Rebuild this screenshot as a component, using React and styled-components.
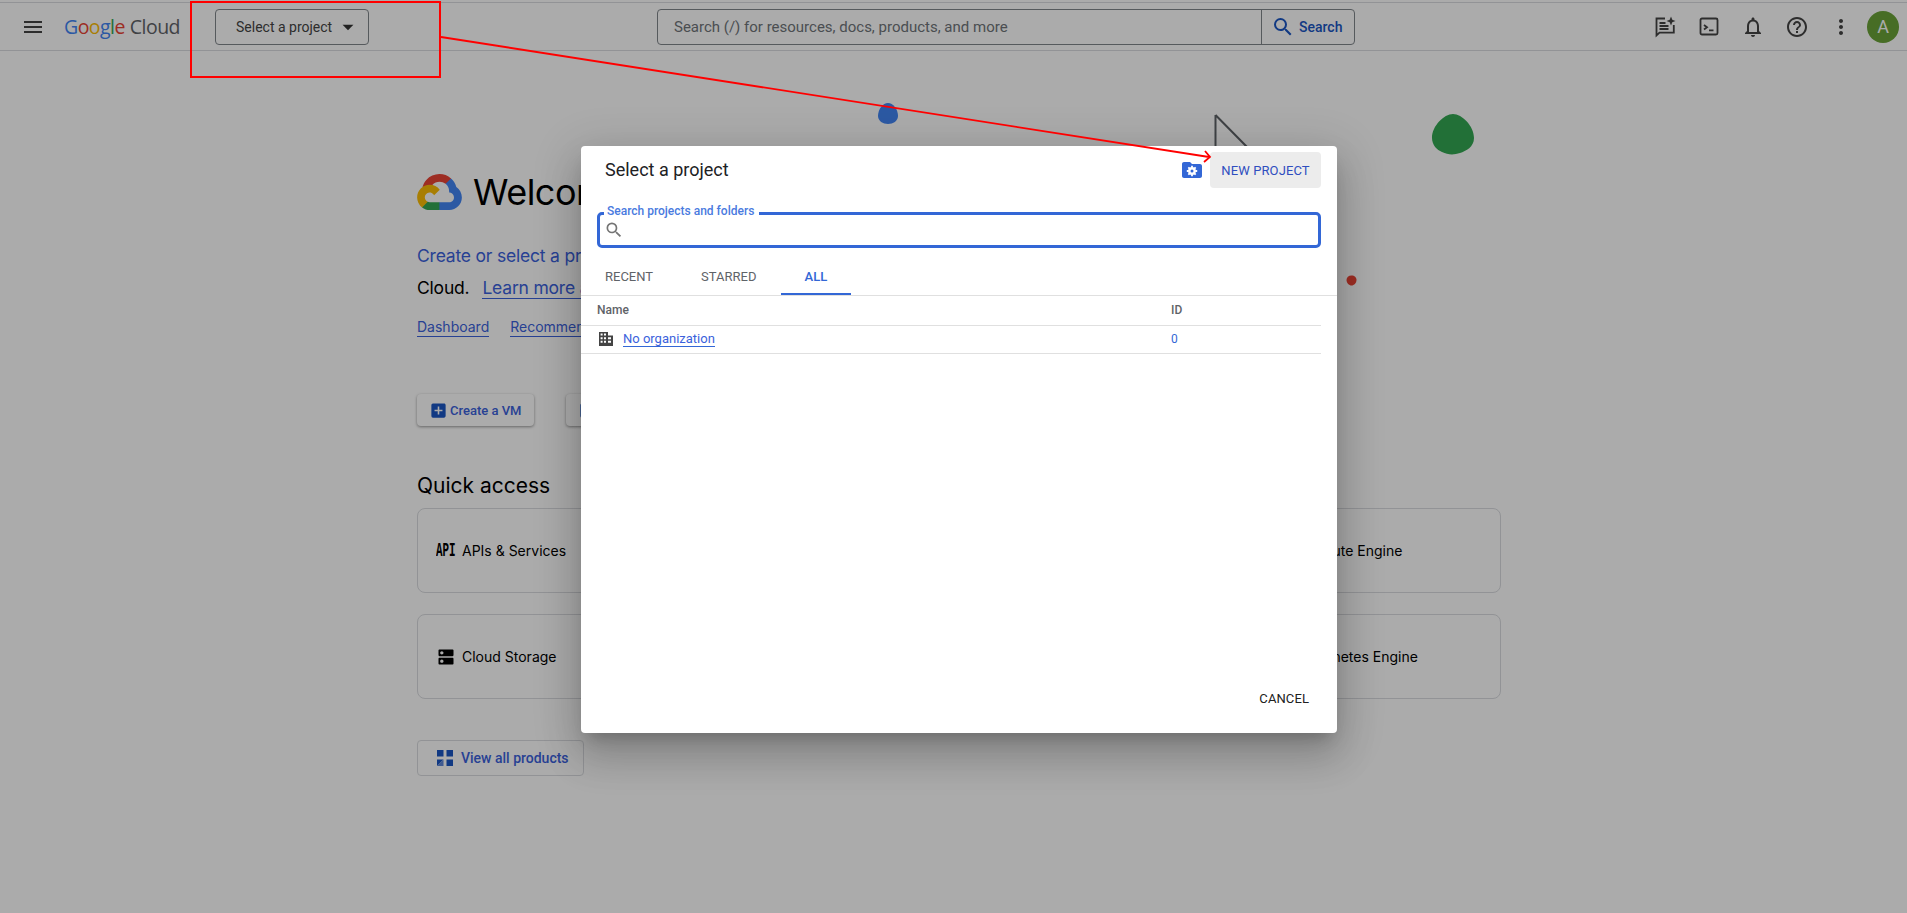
import React from 'react';
import styled, { createGlobalStyle } from 'styled-components';
import {
  MdMenu,
  MdSearch,
  MdArrowDropDown,
  MdNotificationsNone,
  MdHelpOutline,
  MdMoreVert,
  MdAddBox,
  MdDns,
} from 'react-icons/md';

const linkColor = '#3b62dc';

const GlobalStyle = createGlobalStyle`
  html, body {
    margin: 0;
    height: 100%;
    overflow: hidden;
    background: #fff;
    font-family: Roboto, "Liberation Sans", sans-serif;
  }
`;

const Page = styled.div`
  position: relative;
  width: 1907px;
  height: 913px;
  overflow: hidden;
  padding-top: 2px;
  box-sizing: border-box;
`;

const TopLine = styled.div`
  height: 1px;
  background: #dadce0;
`;

const TopBar = styled.header`
  display: flex;
  align-items: center;
  height: 48px;
  box-sizing: border-box;
  border-bottom: 1px solid #dadce0;
  padding: 0 8px 0 21px;
`;

const MenuButton = styled.div`
  display: flex;
  color: #444;
  width: 43px;
`;

const Logo = styled.div`
  display: flex;
  align-items: baseline;
  font-family: "Open Sans", sans-serif;
  font-size: 19.5px;
  letter-spacing: -0.55px;
  width: 151px;
  color: #5f6368;
`;

const LogoLetter = styled.span`
  color: ${(p) => p.$color};
`;

const LogoWord = styled.span`
  margin-left: 5px;
`;

const ProjectButton = styled.div`
  display: flex;
  align-items: center;
  box-sizing: border-box;
  width: 154px;
  height: 36px;
  padding-left: 20px;
  border: 1px solid #80868b;
  border-radius: 4px;
  font-size: 14px;
  color: #444;
  svg {
    margin-left: 3px;
    color: #333;
  }
`;

const SearchBar = styled.div`
  display: flex;
  box-sizing: border-box;
  width: 698px;
  height: 36px;
  margin-left: 288px;
  border: 1px solid #80868b;
  border-radius: 4px;
`;

const SearchInput = styled.div`
  flex: 1;
  display: flex;
  align-items: center;
  padding-left: 16px;
  font-size: 15px;
  color: #70757a;
  border-right: 1px solid #80868b;
`;

const SearchAction = styled.div`
  display: flex;
  align-items: center;
  gap: 4px;
  width: 92px;
  box-sizing: border-box;
  padding-left: 9px;
  font-size: 14px;
  font-weight: 500;
  color: #1a56c4;
`;

const TopIcons = styled.div`
  display: flex;
  align-items: center;
  margin-left: auto;
`;

const TopIcon = styled.div`
  display: flex;
  justify-content: center;
  width: 44px;
  color: #444;
`;

const Avatar = styled.div`
  display: flex;
  align-items: center;
  justify-content: center;
  width: 32px;
  height: 32px;
  margin-left: 4px;
  border-radius: 50%;
  background: #6aa338;
  color: #fff;
  font-size: 18px;
`;

const Main = styled.main`
  width: 1084px;
  margin-left: 417px;
  padding-top: 123px;
`;

const Welcome = styled.div`
  display: flex;
  align-items: center;
  gap: 11px;
  height: 36px;
  font-family: Inter, sans-serif;
  font-size: 36px;
  letter-spacing: -0.5px;
  color: #000;
`;

const Lead = styled.p`
  margin: 30px 0 0;
  font-family: Inter, sans-serif;
  font-size: 17.5px;
  letter-spacing: -0.2px;
  line-height: 32px;
  color: ${linkColor};
`;

const LeadPlain = styled.span`
  color: #000;
  margin-right: 13px;
`;

const UnderLink = styled.span`
  border-bottom: 1px solid ${linkColor};
  color: ${linkColor};
`;

const NavLinks = styled.div`
  display: flex;
  gap: 21px;
  margin-top: 14px;
  font-family: Inter, sans-serif;
  font-size: 14px;
  line-height: 18px;
  color: ${linkColor};
`;

const ActionRow = styled.div`
  display: flex;
  gap: 32px;
  margin-top: 57px;
`;

const ActionButton = styled.div`
  display: flex;
  align-items: center;
  gap: 2px;
  box-sizing: border-box;
  width: 117px;
  height: 32px;
  padding-left: 12px;
  border-radius: 4px;
  background: #fff;
  box-shadow: 0 1px 3px rgba(0, 0, 0, 0.4);
  font-size: 13px;
  font-weight: 500;
  color: ${linkColor};
  svg {
    color: #1a56c4;
  }
`;

const SectionTitle = styled.h2`
  margin: 44px 0 0;
  font-family: Inter, sans-serif;
  font-size: 21px;
  font-weight: 400;
  line-height: 32px;
  color: #000;
`;

const CardGrid = styled.div`
  display: grid;
  grid-template-columns: repeat(4, 1fr);
  gap: 21px 24px;
  margin-top: 6px;
`;

const Card = styled.div`
  display: flex;
  align-items: center;
  gap: 6px;
  box-sizing: border-box;
  height: 85px;
  padding-left: 18px;
  border: 1px solid #dadce0;
  border-radius: 8px;
  font-family: Inter, sans-serif;
  font-size: 14px;
  color: #000;
`;

const ApiGlyph = styled.span`
  display: inline-block;
  width: 20px;
  font-family: "Liberation Mono", monospace;
  font-size: 16px;
  font-weight: 700;
  color: #000;
  transform: scale(0.68, 1.3);
  transform-origin: left center;
`;

const ViewAll = styled.div`
  display: flex;
  align-items: center;
  gap: 8px;
  box-sizing: border-box;
  width: 167px;
  height: 36px;
  margin-top: 41px;
  padding-left: 19px;
  border: 1px solid #dadce0;
  border-radius: 4px;
  font-size: 14px;
  font-weight: 500;
  color: ${linkColor};
`;

const Shape = styled.svg`
  position: absolute;
  left: ${(p) => p.$x}px;
  top: ${(p) => p.$y}px;
`;

const Scrim = styled.div`
  position: absolute;
  inset: 0;
  background: rgba(0, 0, 0, 0.33);
`;

const Dialog = styled.div`
  position: absolute;
  left: 581px;
  top: 146px;
  width: 756px;
  height: 587px;
  display: flex;
  flex-direction: column;
  box-sizing: border-box;
  background: #fff;
  border-radius: 4px;
  box-shadow: 0 11px 15px -7px rgba(0, 0, 0, 0.2), 0 24px 38px 3px rgba(0, 0, 0, 0.14),
    0 9px 46px 8px rgba(0, 0, 0, 0.12);
`;

const DialogHead = styled.div`
  display: flex;
  align-items: center;
  height: 36px;
  margin-top: 6px;
  padding: 0 16px 0 24px;
`;

const DialogTitle = styled.h1`
  flex: 1;
  margin: 0 0 2px;
  font-size: 18px;
  font-weight: 400;
  color: #202124;
`;

const NewProject = styled.div`
  display: flex;
  align-items: center;
  justify-content: center;
  width: 111px;
  height: 36px;
  margin-left: 8px;
  border-radius: 4px;
  background: #ececec;
  font-size: 13px;
  letter-spacing: 0.1px;
  color: #2f4ebf;
`;

const SearchField = styled.div`
  position: relative;
  display: flex;
  align-items: center;
  box-sizing: border-box;
  height: 36px;
  margin: 24px 16px 0;
  padding-left: 4px;
  border: 3px solid #3367d6;
  border-radius: 5px;
  color: #757575;
`;

const FieldLabel = styled.span`
  position: absolute;
  left: 4px;
  top: -12px;
  padding: 0 5px 0 3px;
  background: #fff;
  font-size: 12px;
  line-height: 16px;
  font-weight: 500;
  color: #4a7be0;
`;

const Tabs = styled.div`
  display: flex;
  margin-top: 11px;
  height: 37px;
  box-sizing: border-box;
  border-bottom: 1px solid #e0e0e0;
`;

const Tab = styled.div`
  display: flex;
  align-items: center;
  padding: 0 24px;
  height: 36px;
  box-sizing: border-box;
  font-size: 13px;
  font-weight: ${(p) => (p.$active ? 500 : 400)};
  color: ${(p) => (p.$active ? '#3367d6' : '#5f6368')};
  border-bottom: 2px solid ${(p) => (p.$active ? '#3367d6' : 'transparent')};
`;

const TableRow = styled.div`
  display: grid;
  grid-template-columns: 574px 1fr;
  align-items: center;
  height: ${(p) => p.$h}px;
  box-sizing: border-box;
  margin-right: 16px;
  padding: 0 0 1px 16px;
  border-bottom: 1px solid #e0e0e0;
  font-size: 12px;
`;

const HeadCell = styled.div`
  font-weight: 500;
  color: #5f6368;
`;

const NameCell = styled.div`
  display: flex;
  align-items: center;
  gap: 10px;
  padding-left: 2px;
  color: #444;
`;

const OrgLink = styled.span`
  font-size: 13px;
  color: ${linkColor};
  border-bottom: 1px solid #3367d6;
`;

const IdCell = styled.div`
  font-size: 12px;
  color: #3367d6;
`;

const DialogFoot = styled.div`
  display: flex;
  justify-content: flex-end;
  margin-top: auto;
  padding: 0 28px 27px 0;
  font-size: 13px;
  letter-spacing: 0.1px;
  color: #212121;
`;

const Annotation = styled.svg`
  position: absolute;
  inset: 0;
  pointer-events: none;
`;

const CloudLogo = () => (
  <svg width="45" height="36" viewBox="0 0 256 206">
    <path fill="#EA4335" d="M170.25 56.82l22.25-22.25 1.49-9.37C153.44-11.68 88.98-7.5 52.42 33.92 42.27 45.42 34.73 59.76 30.72 74.57l7.97-1.12 44.5-7.34 3.44-3.51c19.8-21.74 53.27-24.67 76.13-6.17l7.5.39z" />
    <path fill="#4285F4" d="M224.2 73.92c-5.11-18.84-15.62-35.77-30.22-48.72l-31.23 31.23c13.19 10.78 20.7 27.01 20.38 44.04v5.54c15.35 0 27.8 12.45 27.8 27.8 0 15.35-12.45 27.48-27.8 27.48h-55.67l-5.47 5.93v33.34l5.47 5.23h55.67c39.93.31 72.55-31.49 72.86-71.42.19-24.2-11.74-46.89-31.79-60.45" />
    <path fill="#34A853" d="M71.87 205.8h55.59v-44.51H71.87c-3.96 0-7.8-.85-11.4-2.5l-7.89 2.42-22.41 22.25-1.95 7.57c12.57 9.49 27.9 14.83 43.65 14.76" />
    <path fill="#FBBC05" d="M71.87 61.43C31.94 61.66-.24 94.23 0 134.16c.13 22.3 10.55 43.29 28.22 56.88l32.25-32.25c-13.99-6.32-20.21-22.79-13.89-36.78 6.32-13.99 22.79-20.21 36.78-13.89 6.16 2.79 11.1 7.72 13.89 13.89l32.25-32.25c-13.72-17.94-35.04-28.42-57.62-28.34" />
  </svg>
);

const ChatSpark = () => (
  <svg width="22" height="22" viewBox="0 0 22 22" fill="none" stroke="currentColor" strokeWidth="1.8">
    <path d="M11 2.5H2.5v17l3-2.8H19.8V9" />
    <path d="M5.5 7h6M5.5 10h9M5.5 13h9" />
    <path d="M17 0.5l1.3 3.2 3.2 1.3-3.2 1.3L17 9.5l-1.3-3.2L12.5 5l3.2-1.3z" fill="currentColor" stroke="none" />
  </svg>
);

const TerminalBox = () => (
  <svg width="20" height="20" viewBox="0 0 20 20" fill="none" stroke="currentColor" strokeWidth="1.8">
    <rect x="1.5" y="1.5" width="17" height="16" rx="1.5" />
    <path d="M5 8l3 2.2L5 12.4M10 13.4h4.5" />
  </svg>
);

const FolderGear = () => (
  <svg width="20" height="16" viewBox="0 0 20 16">
    <path fill="#3367d6" d="M2 0h6l2 2h8c1.1 0 2 .9 2 2v10c0 1.1-.9 2-2 2H2c-1.1 0-2-.9-2-2V2C0 .9.9 0 2 0z" />
    <circle cx="10" cy="9" r="3.9" fill="#fff" />
    <path stroke="#fff" strokeWidth="1.8" d="M10 3.8v2M10 12.2v2M4.8 9h2M13.2 9h2M6.3 5.3l1.4 1.4M12.3 11.3l1.4 1.4M6.3 12.7l1.4-1.4M12.3 6.7l1.4-1.4" />
    <circle cx="10" cy="9" r="1.5" fill="#3367d6" />
  </svg>
);

const Building = () => (
  <svg width="14" height="14" viewBox="0 0 14 14">
    <path
      fill="currentColor"
      fillRule="evenodd"
      d="M0 0h9v3.5h5V14H0zM1.6 1.6v2h2v-2zM5 1.6v2h2v-2zM1.6 5.2v2h2v-2zM5 5.2v2h2v-2zM9 5.2v2h3v-2zM1.6 8.8v2h2v-2zM5 8.8v2h2v-2zM9 8.8v2h3v-2z"
    />
  </svg>
);

const ProductsGrid = () => (
  <svg width="16" height="16" viewBox="0 0 16 16">
    <path fill="#1a56c4" d="M0 0h6.5v6.5H0zM9.5 0H16v6.5H9.5zM9.5 9.5H16V16H9.5z" />
    <path fill="#1a56c4" d="M0 16V9.5h6.5z" />
    <path fill="#5f86d8" d="M0 16L6.5 9.5V16z" />
  </svg>
);

const letters = [
  ['G', '#4285f4'],
  ['o', '#ea4335'],
  ['o', '#fbbc05'],
  ['g', '#4285f4'],
  ['l', '#34a853'],
  ['e', '#ea4335'],
];

const cards = [
  'APIs & Services',
  'IAM & Admin',
  'Billing',
  'Compute Engine',
  'Cloud Storage',
  'BigQuery',
  'VPC network',
  'Kubernetes Engine',
];

const App = () => {
  return (
    <Page>
      <GlobalStyle />
      <TopLine />
      <TopBar>
        <MenuButton>
          <MdMenu size={24} />
        </MenuButton>
        <Logo>
          {letters.map(([l, c], i) => (
            <LogoLetter key={i} $color={c}>{l}</LogoLetter>
          ))}
          <LogoWord>Cloud</LogoWord>
        </Logo>
        <ProjectButton>
          Select a project
          <MdArrowDropDown size={26} />
        </ProjectButton>
        <SearchBar>
          <SearchInput>Search (/) for resources, docs, products, and more</SearchInput>
          <SearchAction>
            <MdSearch size={24} />
            Search
          </SearchAction>
        </SearchBar>
        <TopIcons>
          <TopIcon><ChatSpark /></TopIcon>
          <TopIcon><TerminalBox /></TopIcon>
          <TopIcon><MdNotificationsNone size={24} /></TopIcon>
          <TopIcon><MdHelpOutline size={24} /></TopIcon>
          <TopIcon><MdMoreVert size={24} /></TopIcon>
          <Avatar>A</Avatar>
        </TopIcons>
      </TopBar>

      <Main>
        <Welcome>
          <CloudLogo />
          Welcome
        </Welcome>
        <Lead>
          Create or select a project to get started with Google
          <br />
          <LeadPlain>Cloud.</LeadPlain>
          <UnderLink>Learn more about Google Cloud</UnderLink>
        </Lead>
        <NavLinks>
          <UnderLink>Dashboard</UnderLink>
          <UnderLink>Recommendations</UnderLink>
        </NavLinks>
        <ActionRow>
          <ActionButton>
            <MdAddBox size={19} />
            Create a VM
          </ActionButton>
          <ActionButton>
            <MdAddBox size={19} />
            Run a query
          </ActionButton>
        </ActionRow>
        <SectionTitle>Quick access</SectionTitle>
        <CardGrid>
          {cards.map((name, i) => (
            <Card key={name}>
              {i === 0 ? <ApiGlyph>API</ApiGlyph> : <MdDns size={20} />}
              {name}
            </Card>
          ))}
        </CardGrid>
        <ViewAll>
          <ProductsGrid />
          View all products
        </ViewAll>
      </Main>

      <Shape $x={877} $y={102} width="22" height="23" viewBox="0 0 22 23">
        <path fill="#4285f4" d="M11 1c5 0 10 6 10 13 0 5-5 8-10 8S1 19 1 14C1 7 6 1 11 1z" />
      </Shape>
      <Shape $x={1213} $y={113} width="40" height="40" viewBox="0 0 40 40">
        <path fill="none" stroke="#5f6368" strokeWidth="2" d="M2.5 2L2.5 34M2.5 2L36 36" />
      </Shape>
      <Shape $x={1431} $y={113} width="44" height="44" viewBox="0 0 44 44">
        <path fill="#34a853" d="M22 1c9 0 21 12 21 24 0 9-8 13-14 15-6 2-12 2-18-1C6 37 1 32 1 25 1 13 13 1 22 1z" />
      </Shape>
      <Shape $x={1346} $y={275} width="11" height="11" viewBox="0 0 11 11">
        <path fill="#ea4335" d="M5.5 0.5c3 0 5 2 5 4.5 0 3-2.5 5.5-5 5.5S.5 8 .5 5C.5 2.5 2.5.5 5.5.5z" />
      </Shape>

      <Scrim />

      <Dialog>
        <DialogHead>
          <DialogTitle>Select a project</DialogTitle>
          <FolderGear />
          <NewProject>NEW PROJECT</NewProject>
        </DialogHead>
        <SearchField>
          <FieldLabel>Search projects and folders</FieldLabel>
          <MdSearch size={20} />
        </SearchField>
        <Tabs>
          <Tab>RECENT</Tab>
          <Tab>STARRED</Tab>
          <Tab $active>ALL</Tab>
        </Tabs>
        <TableRow $h={30}>
          <HeadCell>Name</HeadCell>
          <HeadCell>ID</HeadCell>
        </TableRow>
        <TableRow $h={28}>
          <NameCell>
            <Building />
            <OrgLink>No organization</OrgLink>
          </NameCell>
          <IdCell>0</IdCell>
        </TableRow>
        <DialogFoot>CANCEL</DialogFoot>
      </Dialog>

      <Annotation width="1907" height="913" viewBox="0 0 1907 913">
        <rect x="191" y="2" width="249" height="75" fill="none" stroke="#f00" strokeWidth="2" />
        <path d="M441 37L1209 157M1205 151L1210 157L1204 162" fill="none" stroke="#f00" strokeWidth="1.8" />
      </Annotation>
    </Page>
  );
};

export default App;
